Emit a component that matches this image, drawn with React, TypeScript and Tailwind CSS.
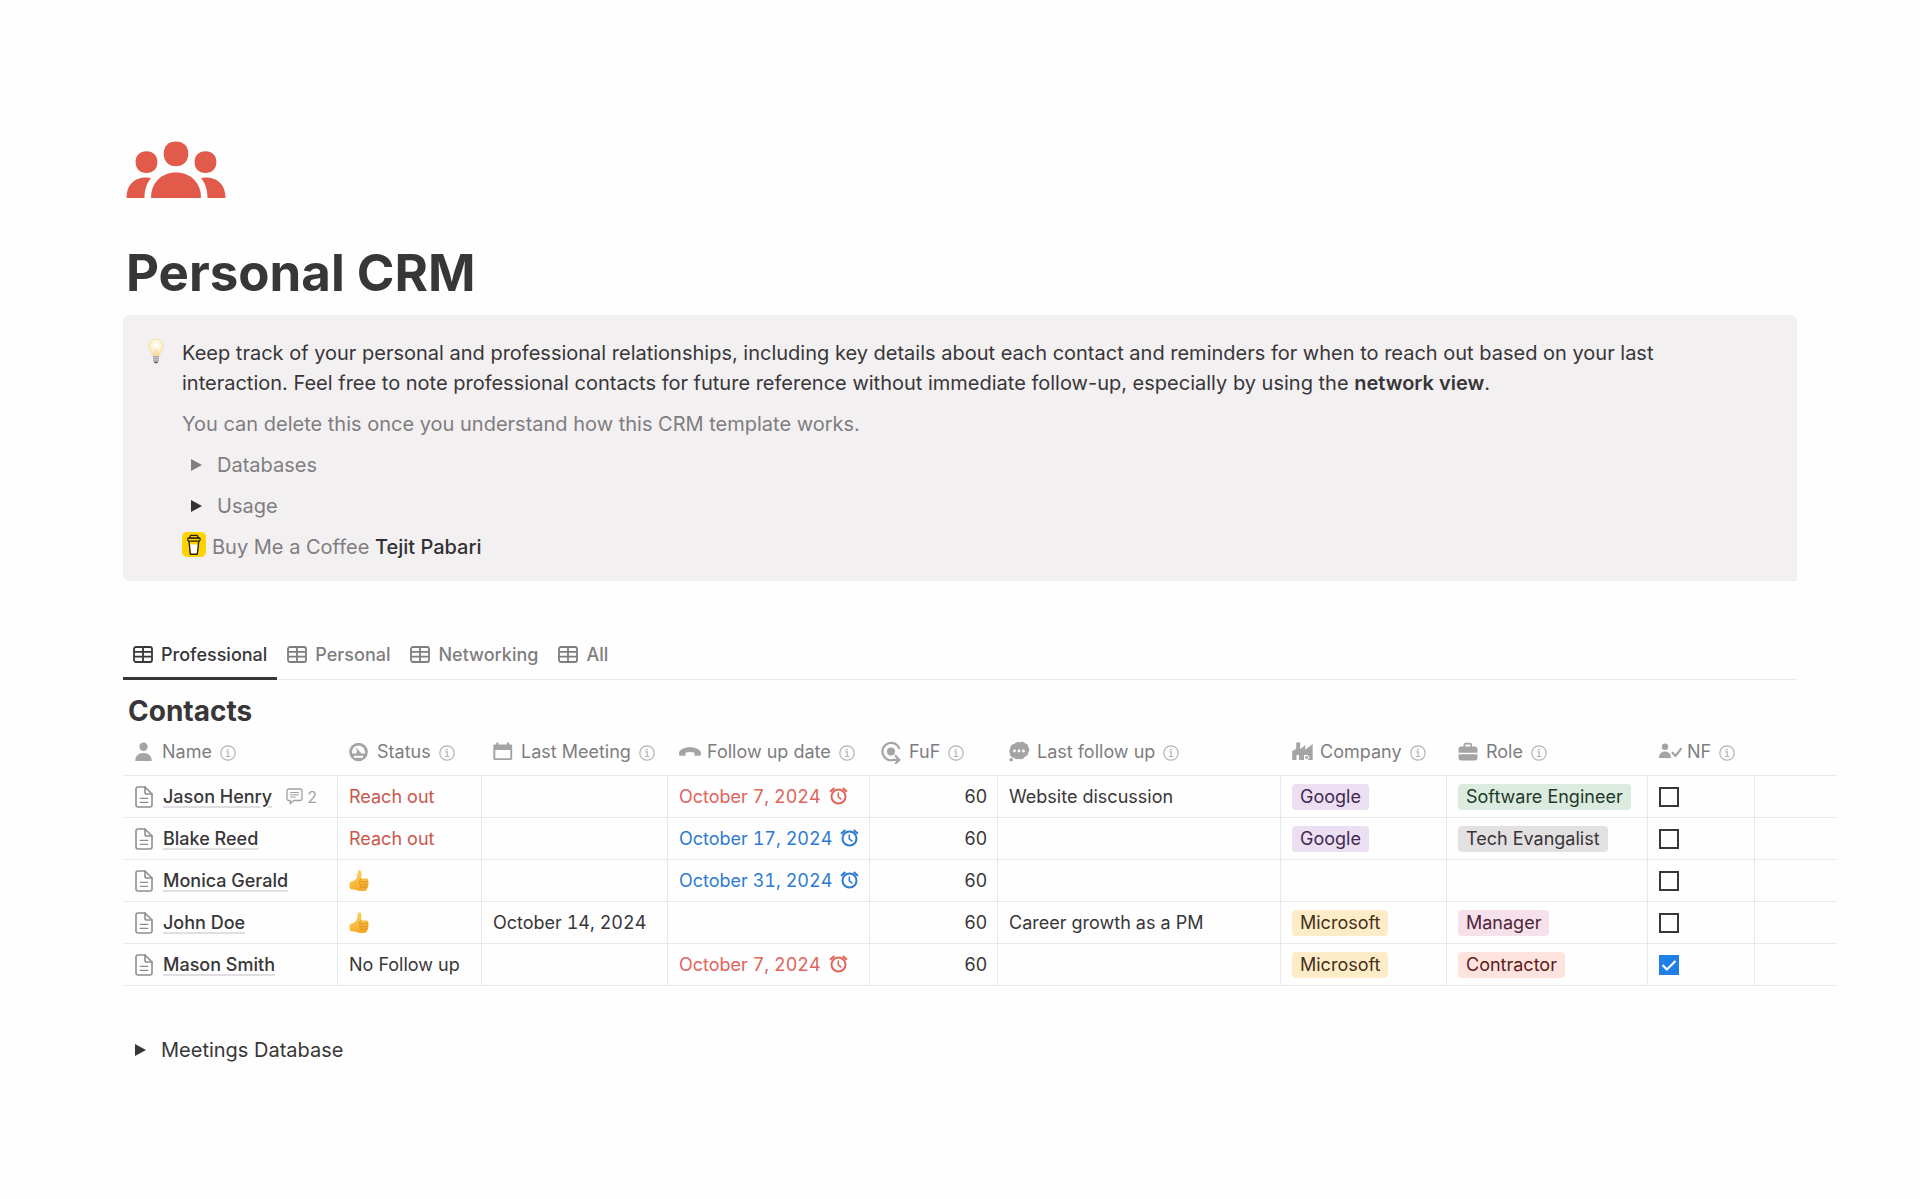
import clsx from "clsx";
import React, { useState } from "react";

type TagColor = "purple" | "green" | "gray" | "yellow" | "pink" | "red";

interface TagProps {
  label: string;
  color: TagColor;
}

interface Contact {
  name: string;
  comments?: number;
  status: "Reach out" | "thumb" | "No Follow up";
  lastMeeting?: string;
  followUp?: { date: string; overdue: boolean };
  fuf: number;
  lastFollowUp?: string;
  company?: TagProps;
  role?: TagProps;
  nf: boolean;
}

const google: TagProps = { label: "Google", color: "purple" };
const microsoft: TagProps = { label: "Microsoft", color: "yellow" };

const contacts: Contact[] = [
  {
    name: "Jason Henry",
    comments: 2,
    status: "Reach out",
    followUp: { date: "October 7, 2024", overdue: true },
    fuf: 60,
    lastFollowUp: "Website discussion",
    company: google,
    role: { label: "Software Engineer", color: "green" },
    nf: false,
  },
  {
    name: "Blake Reed",
    status: "Reach out",
    followUp: { date: "October 17, 2024", overdue: false },
    fuf: 60,
    company: google,
    role: { label: "Tech Evangalist", color: "gray" },
    nf: false,
  },
  {
    name: "Monica Gerald",
    status: "thumb",
    followUp: { date: "October 31, 2024", overdue: false },
    fuf: 60,
    nf: false,
  },
  {
    name: "John Doe",
    status: "thumb",
    lastMeeting: "October 14, 2024",
    fuf: 60,
    lastFollowUp: "Career growth as a PM",
    company: microsoft,
    role: { label: "Manager", color: "pink" },
    nf: false,
  },
  {
    name: "Mason Smith",
    status: "No Follow up",
    followUp: { date: "October 7, 2024", overdue: true },
    fuf: 60,
    company: microsoft,
    role: { label: "Contractor", color: "red" },
    nf: true,
  },
];

const tagColors: Record<TagColor, string> = {
  purple: "bg-[#ebdff1] text-[#412a52]",
  green: "bg-[#dbebdf] text-[#1f3a2b]",
  gray: "bg-[#e3e0e2] text-[#373537]",
  yellow: "bg-[#feebc8] text-[#453018]",
  pink: "bg-[#f6e0e9] text-[#4c2539]",
  red: "bg-[#ffe3df] text-[#5d1b18]",
};

/* icons */

const PeopleIcon = () => (
  <svg width="100" height="57" viewBox="0 0 100 57" fill="#e25a49" aria-hidden="true">
    <path d="M50 0.500c7.500 0 12.300 4.800 12.300 12.300S57.500 25.300 50 25.300 37.700 20.500 37.700 12.800 42.500 0.500 50 0.500Z" />
    <path d="M20.500 10.200c6.700 0 10.900 4.200 10.900 10.900S27.200 32 20.500 32 9.600 27.800 9.600 21.100s4.200-10.900 10.900-10.900ZM79.500 10.200c6.700 0 10.900 4.200 10.900 10.900S86.200 32 79.500 32s-10.900-4.200-10.900-10.900 4.200-10.900 10.900-10.900Z" />
    <path d="M25 57c0-15 10-25.500 25-25.500S75 42 75 57Z" />
    <path d="M0.500 57C0.500 44 8 36.500 20 36.500c2 0 3.500.2 5 .8-4.500 5-6.500 11.700-6.500 19.700ZM99.500 57c0-13-7.500-20.500-19.500-20.500-2 0-3.500.2-5 .8 4.500 5 6.500 11.700 6.500 19.700Z" />
  </svg>
);

const BulbIcon = () => (
  <svg width="18" height="26" viewBox="0 0 18 26" aria-hidden="true">
    <defs>
      <radialGradient id="bulb" cx="0.500" cy="0.380" r="0.600">
        <stop offset="0" stopColor="#ffffff" />
        <stop offset="0.450" stopColor="#fdf6df" />
        <stop offset="1" stopColor="#f5dc9a" />
      </radialGradient>
    </defs>
    <path
      d="M9 1c4.300 0 7.300 3.100 7.300 7.200 0 4.400-3.500 5.800-4 9.800H5.700c-.5-4-4-5.400-4-9.800C1.700 4.100 4.700 1 9 1Z"
      fill="url(#bulb)"
      stroke="#f1dda6"
      strokeWidth="0.800"
    />
    <path d="M8 10v7M10 10v7" stroke="#efd18a" strokeWidth="0.700" />
    <path d="M6 18h6v4.500L10.500 25h-3L6 22.500Z" fill="#a7a5a6" />
    <path d="M6 19.800h6M6 21.800h6" stroke="#d7d5d6" strokeWidth="0.700" />
    <path d="M7 24h4l-.8 1.300H7.800Z" fill="#57555a" />
  </svg>
);

const CoffeeIcon = () => (
  <svg width="24" height="25" viewBox="0 0 24 25" aria-hidden="true">
    <rect width="24" height="25" rx="5" fill="#fed400" />
    <path d="M7.200 9.200 8.600 22h6.300l1.500-12.800Z" fill="#fff" />
    <path d="M7.500 9.500h9v3h-9Z" fill="#fed400" />
    <path d="M7 9l1.300 13.200h7L16.800 9" fill="none" stroke="#2b220c" strokeWidth="1.400" strokeLinejoin="round" />
    <path d="M6.200 6h11.600l.5 1.600c-.3 1.200-1 1.500-2 1.600H7.600c-1.200-.1-1.900-.7-2-1.600Z" fill="#fed400" stroke="#2b220c" strokeWidth="1.300" strokeLinejoin="round" />
    <path d="M7.600 5.800 8.500 3.400h6.800l1 2.400Z" fill="#fed400" stroke="#2b220c" strokeWidth="1.300" strokeLinejoin="round" />
  </svg>
);

const ThumbIcon = () => (
  <svg width="20" height="22" viewBox="0 0 21 23" role="img" aria-label="👍">
    <defs>
      <linearGradient id="thumb" x1="0" y1="0" x2="0.300" y2="1">
        <stop offset="0" stopColor="#fdd866" />
        <stop offset="1" stopColor="#f6ab2b" />
      </linearGradient>
    </defs>
    <path
      d="M9.600.8c.8-1 3-.5 3.400 1.500.3 2-.4 4.700-.2 6.500l5.900.1c1.400.1 1.900 1.600 1.300 2.600.8.600.9 2 .2 2.700.6.800.4 2-.3 2.500.3 1-.1 1.900-1 2.300-.1 1.900-1 2.900-2.600 2.900h-5c-1.700 0-2.900-.6-4.200-1.200l-4.900-.5C.8 20 .4 17.700.5 15.400c0-1.700.5-2.900 1.500-3.100 3.300-.5 5.200-2.200 6.300-4.800.8-2 .4-5.100 1.300-6.700Z"
      fill="url(#thumb)"
    />
    <path
      d="M12.500 12.300c2 .6 4.900.4 7.100-.4M12.700 15.200c2 .5 4.800.3 6.900-.5M12.900 18c1.800.4 4.200.2 6.100-.6M12.900 9.200c-1.400.7-1.900 2-1.400 3.400-.5 1.200-.3 2.200.3 3-.3 1.100 0 2.100.7 2.900"
      fill="none"
      stroke="#d98613"
      strokeWidth="0.800"
      strokeLinecap="round"
    />
  </svg>
);

const Triangle = ({ className }: { className: string }) => (
  <svg width="11" height="12" viewBox="0 0 11 12" className={clsx("fill-current", className)} aria-hidden="true">
    <path d="M0 0 11 6 0 12Z" />
  </svg>
);

const TableIcon = () => (
  <svg
    width="20"
    height="17"
    viewBox="0 0 20 17"
    fill="none"
    stroke="currentColor"
    strokeWidth="1.800"
    className="shrink-0"
    aria-hidden="true"
  >
    <rect x="1" y="1" width="18" height="15" rx="2" />
    <path d="M1 5.800h18M1 10.700h18M10 1v15" />
  </svg>
);

const PageIcon = () => (
  <svg
    width="18"
    height="22"
    viewBox="0 0 18 22"
    fill="none"
    stroke="#8f8d90"
    strokeWidth="1.600"
    strokeLinejoin="round"
    strokeLinecap="round"
    className="shrink-0"
    aria-hidden="true"
  >
    <path d="M10 1H3.200C2 1 1 1.900 1 3v16c0 1.100 1 2 2.200 2h11.600c1.200 0 2.200-.9 2.200-2V8Z" />
    <path d="M10 1v5.200C10 7.200 10.800 8 11.800 8H17" />
    <path d="M5.200 12.300h7.600M5.200 16.300h7.600" strokeWidth="1.200" />
  </svg>
);

const CommentIcon = () => (
  <svg
    width="17"
    height="17"
    viewBox="0 0 17 17"
    fill="none"
    stroke="currentColor"
    strokeWidth="1.300"
    strokeLinejoin="round"
    strokeLinecap="round"
    aria-hidden="true"
  >
    <path d="M3 1h11c1.200 0 2 .8 2 2v7.500c0 1.200-.8 2-2 2H7.500L4.300 15.800V12.500H3c-1.200 0-2-.8-2-2V3c0-1.200.8-2 2-2Z" />
    <path d="M4.500 4.500h8M4.500 6.800h8M4.500 9.100h5" strokeWidth="1" />
  </svg>
);

const AlarmIcon = () => (
  <svg
    width="19"
    height="20"
    viewBox="0 0 19 20"
    fill="none"
    stroke="currentColor"
    strokeWidth="2"
    className="shrink-0"
    aria-hidden="true"
  >
    <circle cx="9.500" cy="9.500" r="7" />
    <path d="M1 4.700 5.300 1M18 4.700 13.700 1" />
    <path d="M9.300 5.500v4.300l3 2.500" strokeWidth="1.500" />
  </svg>
);

const InfoIcon = () => (
  <svg
    width="16"
    height="16"
    viewBox="0 0 16 16"
    fill="none"
    stroke="#b3b1b3"
    className="mt-0.5 shrink-0"
    aria-hidden="true"
  >
    <circle cx="8" cy="8" r="7.200" strokeWidth="1.200" />
    <path d="M6.200 6.900h2v4.300M5.800 11.500h4.600" strokeWidth="1.100" />
    <circle cx="8" cy="4.600" r="0.900" fill="#b3b1b3" stroke="none" />
  </svg>
);

const HeadIcon = ({ children }: { children: React.ReactNode }) => (
  <svg width="24" height="24" viewBox="0 0 24 24" fill="#a5a3a6" className="shrink-0" aria-hidden="true">
    {children}
  </svg>
);

const headIcons = {
  person: (
    <HeadIcon>
      <circle cx="9.500" cy="6.700" r="4.200" />
      <path d="M1.300 21c0-5 2.800-8 8.200-8s8.200 3 8.200 8Z" />
    </HeadIcon>
  ),
  gauge: (
    <HeadIcon>
      <circle cx="9.500" cy="12" r="9.300" />
      <path d="M3 12.300C3 8.500 5.800 5.800 9.500 5.800s6.500 2.700 6.500 6.500c0 .4 0 .8-.2 1.200h-4.100c.2-1.200-.4-2.100-1.500-2.300L7 7l1 5c-.5.400-.7 1-.6 1.500H3.200C3 13.100 3 12.700 3 12.300Z" fill="#fefefe" />
      <path d="M5 15.800h9v2H5Z" fill="#fefefe" />
    </HeadIcon>
  ),
  calendar: (
    <HeadIcon>
      <path
        fillRule="evenodd"
        d="M3.300 2.500h2.200V4.500h8.500V2.500h2.200v2h1.800c.7 0 1.200.5 1.200 1.200v13.100c0 .7-.5 1.200-1.200 1.200H1.500c-.7 0-1.200-.5-1.200-1.200V5.700c0-.7.5-1.200 1.200-1.200h1.800ZM2.300 10v8.200h15V10Z"
      />
    </HeadIcon>
  ),
  phone: (
    <HeadIcon>
      <path d="M0 13.200C0 9.500 5.500 7.200 11 7.200s11 2.300 11 6c0 1.300-.3 2.600-1 2.600h-4.600c-.8 0-1-.6-1-1.300V12.500c-2.700-.8-6.100-.8-8.800 0v2c0 .7-.2 1.300-1 1.300H1c-.7 0-1-1.300-1-2.600Z" />
    </HeadIcon>
  ),
  cycle: (
    <HeadIcon>
      <circle cx="10" cy="11.500" r="4" />
      <path
        d="M18.400 8.900A8.700 8.700 0 1 0 12.500 19.900h5.500M14 15.300l4.300 4.600-4.300 4.100"
        fill="none"
        stroke="#a5a3a6"
        strokeWidth="2.200"
      />
    </HeadIcon>
  ),
  thought: (
    <HeadIcon>
      <path d="M5.700 3.700c1.100-1.500 3.200-2 4.700-1.200 1.800-1.400 4.600-.9 5.700 1 2 .1 3.400 1.800 3.200 3.700 1.500 1.500 1.400 4-.1 5.300.2 2.300-1.500 4-3.700 4.500-1.100 2-3.800 3-5.600 1.700-1.700.8-3.800.6-4.900-.9-2.300.1-4-1.700-3.900-3.800-1-1.600-1-3.800 0-5.500.1-2.600 2-4.600 4.600-4.800Z" />
      <circle cx="2.200" cy="19.700" r="1.800" />
      <g fill="#fefefe">
        <circle cx="5.500" cy="11" r="1.400" />
        <circle cx="10" cy="11" r="1.400" />
        <circle cx="14.500" cy="11" r="1.400" />
      </g>
    </HeadIcon>
  ),
  factory: (
    <HeadIcon>
      <path
        fillRule="evenodd"
        d="M4.200 2.500h4v6.700L13.200 5v4.700L20.700 4v16H16v-5h-4v5H7v-5H4.500v5H.2v-9l4-2ZM13.300 16.200h4v2.500h-4Z"
      />
    </HeadIcon>
  ),
  briefcase: (
    <HeadIcon>
      <path
        fillRule="evenodd"
        d="M5.500 6.500V5c0-1.300.9-2.200 2-2.200h4.500c1.100 0 2 .9 2 2.200v1.500H17c1.400 0 2.500 1.100 2.500 2.500v3.700H.5V9c0-1.400 1.100-2.500 2.500-2.500Zm1.700 0h5.100V5c0-.3-.2-.5-.5-.5H7.700c-.3 0-.5.2-.5.500Z"
      />
      <path d="M.5 14.200h19V18c0 1.400-1.100 2.500-2.500 2.500H3C1.600 20.500.5 19.400.5 18Z" />
    </HeadIcon>
  ),
  personCheck: (
    <HeadIcon>
      <circle cx="6" cy="6.700" r="3.200" />
      <path d="M0 18c0-4.200 2.300-6.500 6-6.500s6 2.300 6 6.500Z" />
      <path
        d="m13.500 12.700 3 3.200 5.500-7"
        fill="none"
        stroke="#a5a3a6"
        strokeWidth="2.200"
        strokeLinecap="round"
        strokeLinejoin="round"
      />
    </HeadIcon>
  ),
};

const columns: { label: string; icon: keyof typeof headIcons; width: string }[] = [
  { label: "Name", icon: "person", width: "w-[215px]" },
  { label: "Status", icon: "gauge", width: "w-[144px]" },
  { label: "Last Meeting", icon: "calendar", width: "w-[186px]" },
  { label: "Follow up date", icon: "phone", width: "w-[202px]" },
  { label: "FuF", icon: "cycle", width: "w-[128px]" },
  { label: "Last follow up", icon: "thought", width: "w-[283px]" },
  { label: "Company", icon: "factory", width: "w-[166px]" },
  { label: "Role", icon: "briefcase", width: "w-[201px]" },
  { label: "NF", icon: "personCheck", width: "w-[107px]" },
];

/* blocks */

const Toggle = ({ label, dark }: { label: string; dark?: boolean }) => {
  const [open, setOpen] = useState(false);

  return (
    <button
      type="button"
      aria-expanded={open}
      onClick={() => setOpen((prev) => !prev)}
      className="flex items-center gap-[15px] pl-[9px] text-left"
    >
      <Triangle className={clsx(dark && "text-[#323032]")} />
      {label}
    </button>
  );
};

const Callout = () => (
  <aside className="mt-[11px] flex rounded-md rounded-br-none bg-[#f3f0f2] pt-[23px] pr-16 pb-[19px] pl-6 text-xl leading-[30px] text-[#7f7d7f]">
    <span className="mr-[17px]">
      <BulbIcon />
    </span>
    <div className="flex flex-col items-start gap-[11px]">
      <p className="text-[#383638]">
        Keep track of your personal and professional relationships, including
        key details about each contact and reminders for when to reach out based
        on your last interaction. Feel free to note professional contacts for
        future reference without immediate follow-up, especially by using the{" "}
        <strong className="font-semibold">network view</strong>.
      </p>
      <p>You can delete this once you understand how this CRM template works.</p>
      <Toggle label="Databases" />
      <Toggle label="Usage" dark />
      <p className="flex items-start">
        <CoffeeIcon />
        <span className="ml-1.5">
          Buy Me a Coffee{" "}
          <a href="#" className="font-medium text-[#323032]">
            Tejit Pabari
          </a>
        </span>
      </p>
    </div>
  </aside>
);

const Tabs = () => {
  const [active, setActive] = useState("Professional");

  return (
    <div role="tablist" className="mt-[51px] flex border-b border-[#ebe9eb]">
      {["Professional", "Personal", "Networking", "All"].map((tab) => (
        <button
          key={tab}
          type="button"
          role="tab"
          aria-selected={tab === active}
          onClick={() => setActive(tab)}
          className={clsx(
            "-mb-px flex h-12 items-center gap-2 border-b-3 px-2.5 text-lg font-medium",
            tab === active
              ? "border-[#383638] text-[#383638]"
              : "border-transparent text-[#7f7d7f]"
          )}
        >
          <TableIcon />
          {tab}
        </button>
      ))}
    </div>
  );
};

const Tag = ({ label, color }: TagProps) => (
  <span className={clsx("inline-block rounded px-2 leading-[26px]", tagColors[color])}>
    {label}
  </span>
);

const Cell = ({
  children,
  className,
}: {
  children?: React.ReactNode;
  className?: string;
}) => (
  <td className={clsx("h-[42px] border-r border-b border-[#e9e7e9] pr-2.5 pl-[11px]", className)}>
    {children}
  </td>
);

const Checkbox = ({ defaultChecked, name }: { defaultChecked: boolean; name: string }) => (
  <span className="relative block size-5">
    <input
      type="checkbox"
      defaultChecked={defaultChecked}
      aria-label={`NF ${name}`}
      className="peer block size-5 appearance-none border-2 border-[#383638] checked:border-[#1f7fe6] checked:bg-[#1f7fe6]"
    />
    <svg
      viewBox="0 0 20 20"
      fill="none"
      stroke="#fff"
      strokeWidth="2.200"
      className="pointer-events-none absolute inset-0 hidden peer-checked:block"
      aria-hidden="true"
    >
      <path d="m3.500 10 4.300 4.500L16.500 6" />
    </svg>
  </span>
);

const Row = ({ contact }: { contact: Contact }) => (
  <tr>
    <Cell>
      <div className="flex items-center pl-px">
        <PageIcon />
        <a href="#" className="ml-2.5 font-medium underline decoration-[#e0dee0] decoration-2 underline-offset-3">
          {contact.name}
        </a>
        {contact.comments && (
          <span className="ml-3.5 flex items-center gap-1 text-base text-[#a3a1a3]">
            <CommentIcon />
            {contact.comments}
          </span>
        )}
      </div>
    </Cell>
    <Cell>
      {contact.status === "thumb" ? (
        <ThumbIcon />
      ) : (
        <span className={clsx(contact.status === "Reach out" && "text-[#c9574b]")}>
          {contact.status}
        </span>
      )}
    </Cell>
    <Cell className="tabular-nums">{contact.lastMeeting}</Cell>
    <Cell className="tabular-nums">
      {contact.followUp && (
        <span
          className={clsx(
            "flex items-center gap-2",
            contact.followUp.overdue ? "text-[#e0645a]" : "text-[#2f7bd0]"
          )}
        >
          {contact.followUp.date}
          <AlarmIcon />
        </span>
      )}
    </Cell>
    <Cell className="text-right">{contact.fuf}</Cell>
    <Cell>{contact.lastFollowUp}</Cell>
    <Cell>{contact.company && <Tag {...contact.company} />}</Cell>
    <Cell>{contact.role && <Tag {...contact.role} />}</Cell>
    <Cell>
      <Checkbox defaultChecked={contact.nf} name={contact.name} />
    </Cell>
    <td className="border-b border-[#e9e7e9]" />
  </tr>
);

const ContactsTable = () => (
  <div className="-mr-10">
    <table className="w-full table-fixed border-separate border-spacing-0 text-lg leading-6 whitespace-nowrap">
      <thead>
        <tr>
          {columns.map(({ label, icon, width }) => (
            <th
              key={label}
              className={clsx(
                "h-[47px] border-b border-[#ebe9eb] pl-[11px] text-left font-normal text-[#7f7d7f]",
                width
              )}
            >
              <span className="flex items-center">
                {headIcons[icon]}
                <span className="mr-2 ml-1">{label}</span>
                <InfoIcon />
              </span>
            </th>
          ))}
          <td className="border-b border-[#ebe9eb]" />
        </tr>
      </thead>
      <tbody>
        {contacts.map((contact) => (
          <Row key={contact.name} contact={contact} />
        ))}
      </tbody>
    </table>
  </div>
);

const App = () => (
  <main className="min-h-screen bg-[#fefefe] px-[123px] pt-[141px] pb-32 font-['Inter',sans-serif] text-[#383638]">
    <header className="pl-[3px]">
      <PeopleIcon />
      <h1 className="mt-11 text-[51px] leading-[62px] font-bold">Personal CRM</h1>
    </header>
    <Callout />
    <Tabs />
    <h2 className="mt-[13px] pl-[5px] text-[28px] leading-9 font-bold">Contacts</h2>
    <ContactsTable />
    <div className="mt-[49px] pl-[3px] text-xl leading-[30px]">
      <Toggle label="Meetings Database" />
    </div>
  </main>
);

export default App;
